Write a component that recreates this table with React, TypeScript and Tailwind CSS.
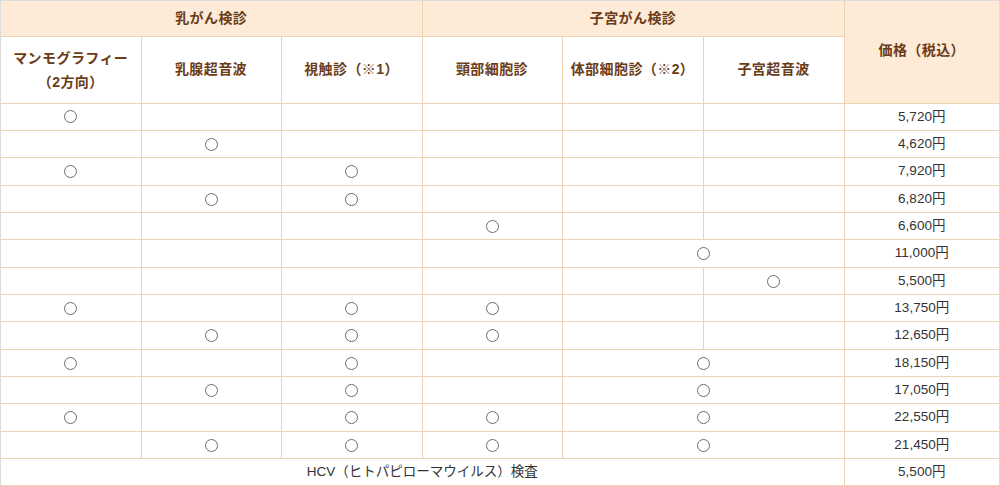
import React from 'react';

type Row = { marks: number[]; merged?: boolean; price: string };

const ROWS: Row[] = [
  { marks: [0], price: '5,720円' },
  { marks: [1], price: '4,620円' },
  { marks: [0, 2], price: '7,920円' },
  { marks: [1, 2], price: '6,820円' },
  { marks: [3], price: '6,600円' },
  { marks: [4], merged: true, price: '11,000円' },
  { marks: [5], price: '5,500円' },
  { marks: [0, 2, 3], price: '13,750円' },
  { marks: [1, 2, 3], price: '12,650円' },
  { marks: [0, 2, 4], merged: true, price: '18,150円' },
  { marks: [1, 2, 4], merged: true, price: '17,050円' },
  { marks: [0, 2, 3, 4], merged: true, price: '22,550円' },
  { marks: [1, 2, 3, 4], merged: true, price: '21,450円' },
];

// ○ mark drawn as a ring so it has the size of the original glyph
const Mark = () => (
  <span className="inline-block align-middle w-[13px] h-[13px] rounded-full border border-[#6b6b6b]" />
);

const App: React.FC = () => {
  const cell = 'border border-[#ecd3b4] text-center align-middle p-0';
  const head = 'border border-[#ecd3b4] text-center align-middle p-0 font-bold text-[14px] text-[#6b3c17] tracking-[0.03em]';

  return (
    <div
      className="w-[1000px] h-[486px] overflow-hidden bg-white border-l border-t border-r border-[#dcdcdc]"
      style={{ fontFamily: '"Liberation Sans", "Noto Sans CJK JP", sans-serif' }}
    >
      <table className="w-full table-fixed border-collapse text-[13.5px] text-[#333]">
        <colgroup>
          <col className="w-[140px]" />
          <col className="w-[140px]" />
          <col className="w-[141px]" />
          <col className="w-[140px]" />
          <col className="w-[141px]" />
          <col className="w-[141px]" />
          <col />
        </colgroup>
        <thead>
          <tr className="h-[35px]">
            <th colSpan={3} className={`${head} bg-[#fdebd7] border-t-0 border-l-0`}>乳がん検診</th>
            <th colSpan={3} className={`${head} bg-[#fdebd7] border-t-0`}>子宮がん検診</th>
            <th rowSpan={2} className={`${head} bg-[#fdebd7] border-t-0 border-r-0 pb-[2px]`}>価格（税込）</th>
          </tr>
          <tr className="h-[67px]">
            <th className={`${head} border-l-0 leading-[24px]`}>
              マンモグラフィー
              <br />
              （2方向）
            </th>
            <th className={head}>乳腺超音波</th>
            <th className={head}>視触診（※1）</th>
            <th className={head}>頸部細胞診</th>
            <th className={head}>体部細胞診（※2）</th>
            <th className={head}>子宮超音波</th>
          </tr>
        </thead>
        <tbody>
          {ROWS.map((row, i) => (
            <tr key={i} className="h-[27.35px]">
              {[0, 1, 2, 3].map((c) => (
                <td key={c} className={`${cell} ${c === 0 ? 'border-l-0' : ''}`}>
                  {row.marks.includes(c) ? <Mark /> : null}
                </td>
              ))}
              {row.merged ? (
                <td colSpan={2} className={cell}>
                  <Mark />
                </td>
              ) : (
                <>
                  <td className={cell}>{row.marks.includes(4) ? <Mark /> : null}</td>
                  <td className={cell}>{row.marks.includes(5) ? <Mark /> : null}</td>
                </>
              )}
              <td className={`${cell} border-r-0`}>{row.price}</td>
            </tr>
          ))}
          <tr className="h-[27.35px]">
            <td colSpan={6} className={`${cell} border-l-0`}>HCV（ヒトパピローマウイルス）検査</td>
            <td className={`${cell} border-r-0`}>5,500円</td>
          </tr>
        </tbody>
      </table>
    </div>
  );
};

export default App;
